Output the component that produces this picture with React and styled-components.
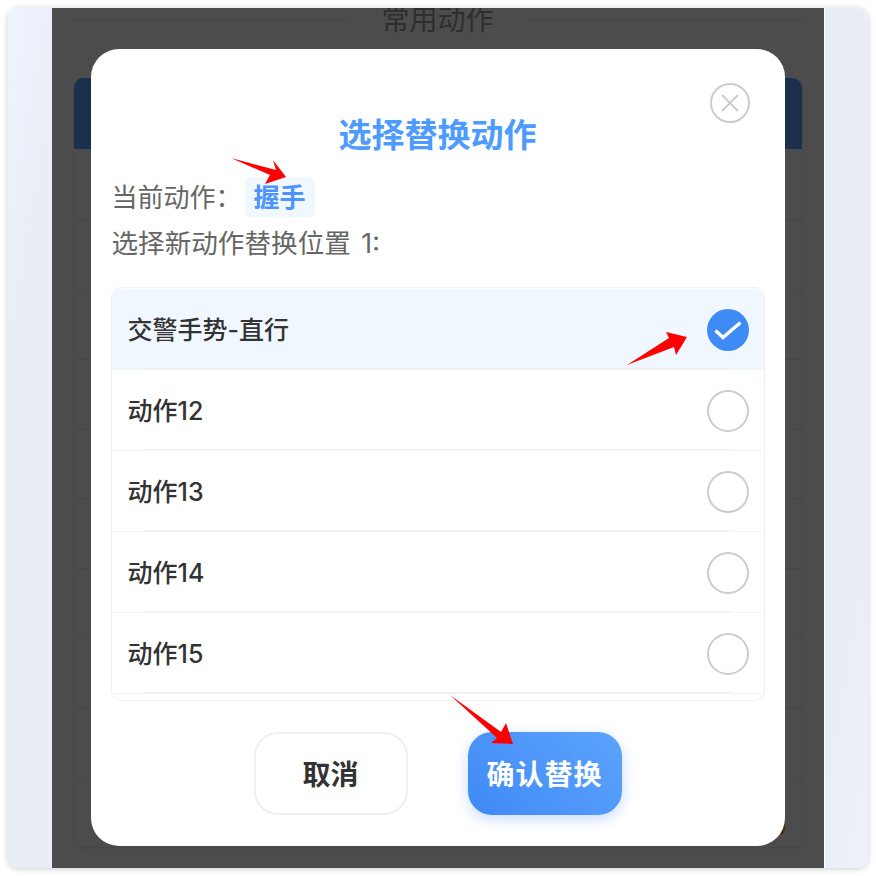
import React from "react";
import styled, { createGlobalStyle } from "styled-components";

const Global = createGlobalStyle`
  html, body { margin: 0; padding: 0; background: #fff; }
  body { font-family: Inter, "Noto Sans CJK SC", "Noto Sans", sans-serif; }
  * { box-sizing: border-box; }
`;

const Page = styled.div`
  width: 876px;
  height: 876px;
  padding: 8px;
  position: relative;
  overflow: hidden;
`;

const Window = styled.div`
  width: 860px;
  height: 860px;
  border-radius: 10px;
  overflow: hidden;
  display: flex;
  justify-content: center;
  background: linear-gradient(100deg, #eff4fe 0%, #e9edf6 6%, #e9edf6 94%, #ecf1fa 100%);
  box-shadow: 0 1px 6px rgba(0, 0, 0, 0.2);
`;

const Phone = styled.div`
  width: 773px;
  height: 100%;
  position: relative;
  background: #fff;
  border-right: 1px solid #fff;
  padding: 0 21px;
  overflow: hidden;
`;

const TitleRow = styled.div`
  height: 24px;
  display: flex;
  align-items: center;
  gap: 34px;
  font-size: 28px;
  line-height: 24px;
  color: #999;
  &::before, &::after {
    content: "";
    flex: 1;
    height: 1px;
    background: #eeeeee;
  }
`;

const BackCard = styled.div`
  margin-top: 46px;
  height: 772px;
  border: 1px solid #eeeeee;
  border-top: 0;
  border-radius: 10px;
  overflow: hidden;
  position: relative;
`;

const BackHeader = styled.div`
  height: 71px;
  margin-bottom: 2px;
  background: #5aa0ff;
`;

const BackRow = styled.div`
  height: 69.7px;
  border-bottom: 1px solid #eeeeee;
`;

const BackThumb = styled.div`
  position: absolute;
  right: 17px;
  bottom: 14px;
  width: 30px;
  height: 30px;
  border-radius: 6px;
  background: #ff9030;
`;

const Overlay = styled.div`
  position: absolute;
  inset: 0;
  background: rgba(0, 0, 0, 0.7);
  display: flex;
  justify-content: center;
  align-items: flex-start;
  padding-top: 41px;
`;

const Modal = styled.div`
  width: 694px;
  height: 797px;
  background: #fff;
  border-radius: 28px;
  padding: 0 20px;
  position: relative;
  display: flex;
  flex-direction: column;
`;

const CloseButton = styled.button`
  position: absolute;
  top: 34px;
  right: 35px;
  width: 40px;
  height: 40px;
  border: 0;
  padding: 0;
  background: none;
  color: #cccccc;
`;

const ModalTitle = styled.h2`
  margin: 62px 0 0;
  height: 48px;
  font-size: 33px;
  line-height: 48px;
  font-weight: 700;
  text-align: center;
  color: #4d9bff;
`;

const CurrentLine = styled.div`
  margin-top: 18px;
  padding-left: 1px;
  height: 40px;
  display: flex;
  align-items: center;
  font-size: 26px;
  color: #666;
`;

const CurrentLabel = styled.span`
  margin-bottom: 3px;
`;

const Tag = styled.span`
  margin-left: 3px;
  height: 40px;
  padding: 0 9px 3px;
  display: flex;
  align-items: center;
  border-radius: 6px;
  background: #f0f7ff;
  color: #4d94ff;
  font-weight: 700;
`;

const Prompt = styled.div`
  margin-top: 6px;
  padding-left: 1px;
  height: 40px;
  font-size: 26.6px;
  line-height: 40px;
  word-spacing: 3px;
  color: #666;
`;

const List = styled.div`
  margin-top: 24px;
  height: 414px;
  padding-top: 1px;
  border: 1px solid #f0f0f0;
  border-radius: 10px;
  overflow: hidden;
`;

const Row = styled.div`
  height: 81px;
  padding: 2px 15px 0 16px;
  display: flex;
  align-items: center;
  justify-content: space-between;
  position: relative;
  background: ${(p) => (p.$selected ? "#f0f7ff" : "#fff")};
  font-size: 25px;
  font-weight: 500;
  color: #333;
  border-bottom: 1px solid #f3f3f3;
  &::after {
    content: "";
    position: absolute;
    left: 33px;
    right: 34px;
    bottom: 0;
    height: 1px;
    background: #efefef;
  }
`;

const RowLabel = styled.span`
  margin-bottom: 4px;
`;

const Radio = styled.span`
  width: 42px;
  height: 42px;
  border-radius: 50%;
  display: flex;
  align-items: center;
  justify-content: center;
  border: ${(p) => (p.$checked ? "0" : "2px solid #cccccc")};
  background: ${(p) => (p.$checked ? "#3f8bf5" : "#fff")};
`;

const Footer = styled.div`
  margin-top: 31px;
  display: flex;
  justify-content: center;
  gap: 60px;
`;

const ActionButton = styled.button`
  width: 154px;
  height: 83px;
  padding: 0 0 2px;
  border-radius: 24px;
  font-family: inherit;
  font-size: 28px;
  font-weight: 700;
  letter-spacing: ${(p) => (p.$primary ? "1px" : "0")};
  border: ${(p) => (p.$primary ? "0" : "2px solid #f0f0f0")};
  color: ${(p) => (p.$primary ? "#fff" : "#333")};
  background: ${(p) =>
    p.$primary ? "linear-gradient(45deg, #4089f6 0%, #5ca4fc 100%)" : "#fff"};
  box-shadow: ${(p) => (p.$primary ? "0 4px 14px rgba(64, 137, 246, 0.3)" : "none")};
`;

const Annotations = styled.svg`
  position: absolute;
  left: 0;
  top: 0;
  width: 876px;
  height: 876px;
  pointer-events: none;
`;

const items = ["交警手势-直行", "动作12", "动作13", "动作14", "动作15"];

export default function App() {
  return (
    <>
      <Global />
      <Page>
        <Window>
          <Phone>
            <TitleRow>常用动作</TitleRow>
            <BackCard>
              <BackHeader />
              {Array.from({ length: 10 }, (_, i) => (
                <BackRow key={i} />
              ))}
              <BackThumb />
            </BackCard>
            <Overlay>
              <Modal>
                <CloseButton aria-label="关闭">
                  <svg width="40" height="40" viewBox="0 0 40 40" fill="none" stroke="currentColor">
                    <circle cx="20" cy="20" r="19" strokeWidth="2" />
                    <path d="M12 12 28 28M28 12 12 28" strokeWidth="2" />
                  </svg>
                </CloseButton>
                <ModalTitle>选择替换动作</ModalTitle>
                <CurrentLine>
                  <CurrentLabel>当前动作：</CurrentLabel>
                  <Tag>握手</Tag>
                </CurrentLine>
                <Prompt>选择新动作替换位置 1:</Prompt>
                <List>
                  {items.map((t, i) => (
                    <Row key={t} $selected={i === 0}>
                      <RowLabel>{t}</RowLabel>
                      <Radio $checked={i === 0}>
                        {i === 0 && (
                          <svg width="28" height="22" viewBox="0 0 28 22" fill="none" stroke="#fff" strokeWidth="3.4">
                            <path d="M1.5 11.5 9 18.5 26.5 3.5" />
                          </svg>
                        )}
                      </Radio>
                    </Row>
                  ))}
                </List>
                <Footer>
                  <ActionButton>取消</ActionButton>
                  <ActionButton $primary>确认替换</ActionButton>
                </Footer>
              </Modal>
            </Overlay>
          </Phone>
        </Window>
        <Annotations viewBox="0 0 876 876">
          <g fill="#ff0000">
            <polygon points="231,158 276,170 273,160 286,177 265,184 270,175" />
            <polygon points="627,365 669,338 666,332 687,337 676,355 674,347" />
            <polygon points="450,695 501,732 506,723 513,744 491,743 497,738" />
          </g>
        </Annotations>
      </Page>
    </>
  );
}
